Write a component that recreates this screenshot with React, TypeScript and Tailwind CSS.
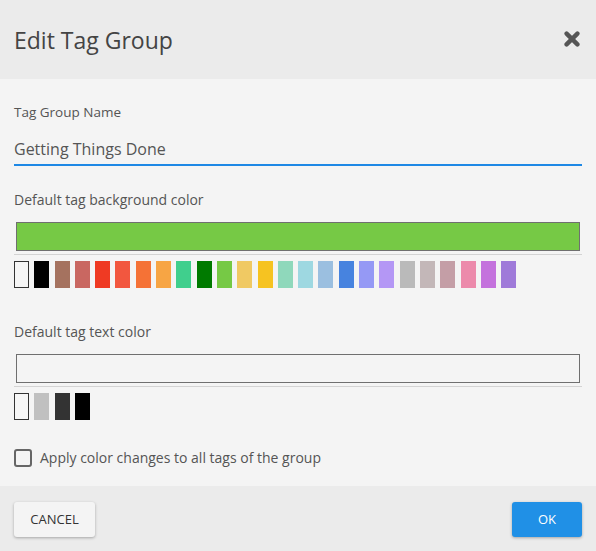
import React from "react";

const bgColors = [
  "#ffffff",
  "#000000",
  "#a5725f",
  "#c96761",
  "#ef3a23",
  "#f2573f",
  "#f57236",
  "#f7a544",
  "#40cf8d",
  "#007a00",
  "#76c945",
  "#f0c963",
  "#f6c321",
  "#8fd8bb",
  "#9ed8e1",
  "#9bbfe0",
  "#4783df",
  "#9599f5",
  "#b497f5",
  "#bababa",
  "#c3b7b8",
  "#c49ea6",
  "#ec8aab",
  "#c472dd",
  "#9f7ad9",
];

const textColors = ["#ffffff", "#c0c0c0", "#333333", "#000000"];

function Swatches({ colors }: { colors: string[] }) {
  return (
    <div className="flex gap-[5.3px]">
      {colors.map((c, i) => (
        <div
          key={i}
          className={
            c === "#ffffff"
              ? "h-[27px] w-[15px] border border-[#333] bg-[#f6f6f6]"
              : "h-[27px] w-[15px]"
          }
          style={c === "#ffffff" ? undefined : { backgroundColor: c }}
        />
      ))}
    </div>
  );
}

export default function App() {
  return (
    <div
      className="flex h-[551px] w-[596px] flex-col bg-[#f4f4f4] text-[#555]"
      style={{ fontFamily: '"Open Sans", "Noto Sans", sans-serif' }}
    >
      <div className="flex h-[79px] items-center justify-between bg-[#ebebeb] pl-[14px] pr-4">
        <h1 className="text-[23px] leading-8 text-[#444]">Edit Tag Group</h1>
        <svg width="16" height="16" viewBox="0 0 16 16" className="mb-[2px]">
          <path
            d="M2.6 2.6 L13.4 13.4 M13.4 2.6 L2.6 13.4"
            stroke="#555"
            strokeWidth="4.4"
            strokeLinecap="round"
          />
        </svg>
      </div>

      <div className="flex-1 px-[14px] pt-[23px]">
        <div className="text-[13.5px] leading-5">Tag Group Name</div>
        <div className="mt-[15px] border-b-2 border-[#1e88e5] pb-[3px] text-[16px] leading-6">
          Getting Things Done
        </div>

        <div className="mt-[24px] text-[14px] leading-5">
          Default tag background color
        </div>
        <div className="mx-[2px] mt-[12px] h-[29px] border border-[#6f6f6f] bg-[#76c945]" />
        <div className="mt-[3px] h-px bg-[#d3d3d3]" />
        <div className="mt-[6px]">
          <Swatches colors={bgColors} />
        </div>

        <div className="mt-[34px] text-[14px] leading-5">
          Default tag text color
        </div>
        <div className="mx-[2px] mt-[12px] h-[29px] border border-[#6f6f6f] bg-[#f4f4f4]" />
        <div className="mt-[3px] h-px bg-[#d3d3d3]" />
        <div className="mt-[6px]">
          <Swatches colors={textColors} />
        </div>

        <label className="mt-[28px] flex h-5 items-center gap-2">
          <span className="h-[18px] w-[18px] rounded-[3px] border-2 border-[#666]" />
          <span className="text-[14px] leading-5">
            Apply color changes to all tags of the group
          </span>
        </label>
      </div>

      <div className="flex h-[65px] items-start justify-between bg-[#ebebeb] px-[14px] pt-4">
        <button
          type="button"
          className="h-[35px] w-[81px] rounded-[3px] bg-[#f4f4f4] text-[13px] text-[#333] shadow-[0_1px_3px_rgba(0,0,0,0.3)]"
        >
          CANCEL
        </button>
        <button
          type="button"
          className="h-[35px] w-[70px] rounded-[3px] bg-[#2090e6] text-[13px] text-white shadow-[0_1px_3px_rgba(0,0,0,0.3)]"
        >
          OK
        </button>
      </div>
    </div>
  );
}
